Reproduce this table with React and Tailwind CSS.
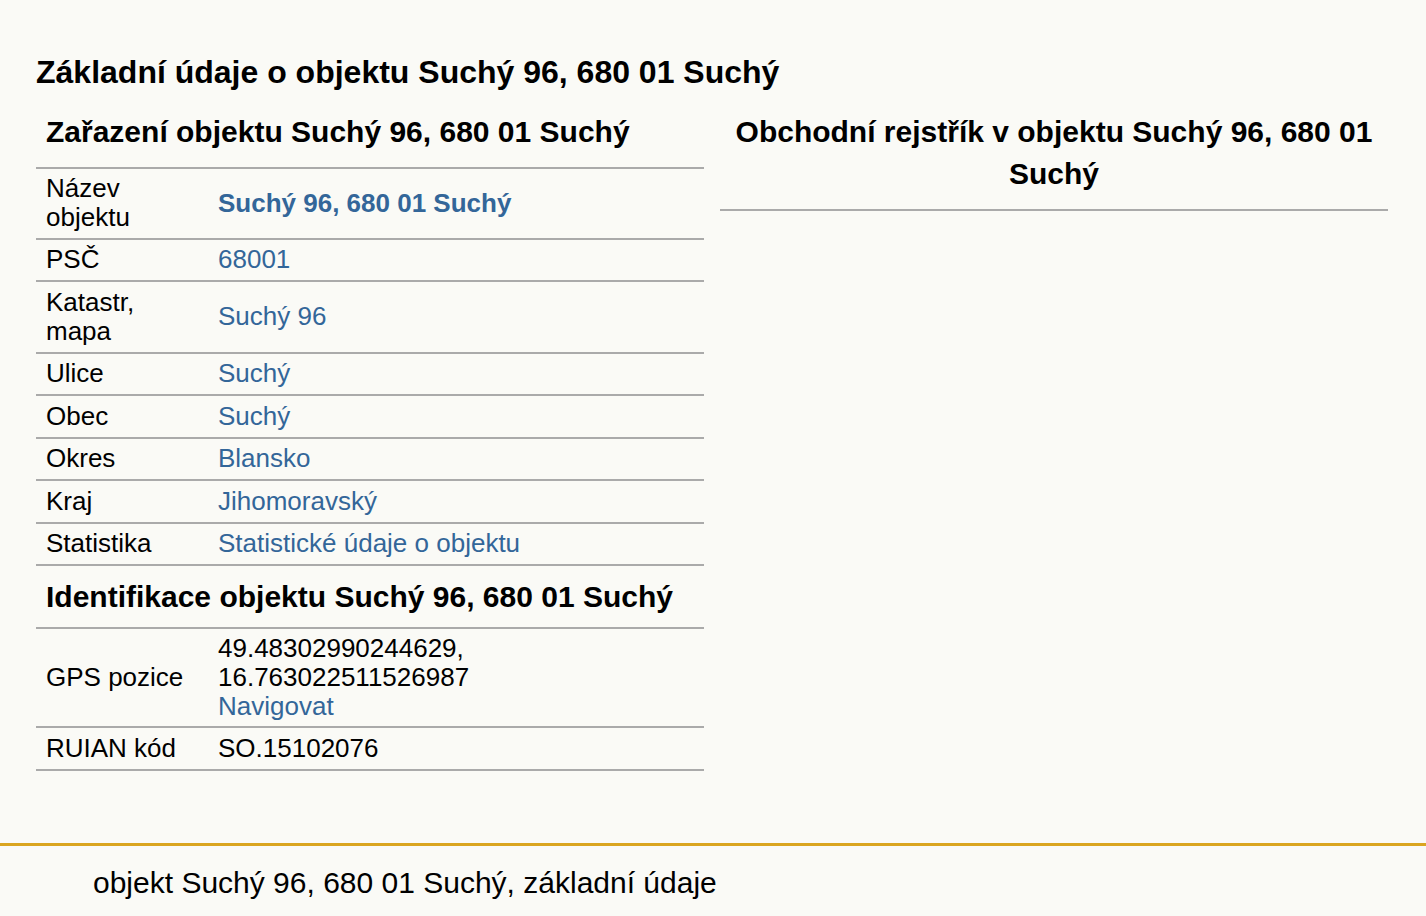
import React from 'react'

const rows = [
  { label: 'Název objektu', value: 'Suchý 96, 680 01 Suchý', bold: true, pad: 'py-[5.25px]' },
  { label: 'PSČ', value: '68001' },
  { label: 'Katastr, mapa', value: 'Suchý 96' },
  { label: 'Ulice', value: 'Suchý' },
  { label: 'Obec', value: 'Suchý' },
  { label: 'Okres', value: 'Blansko' },
  { label: 'Kraj', value: 'Jihomoravský' },
  { label: 'Statistika', value: 'Statistické údaje o objektu' },
]

function Row({ label, children, pad = 'py-[5.75px]' }) {
  return (
    <div className={'grid grid-cols-[172px_1fr] items-center border-b-2 border-[#aaaaaa] text-[26px] leading-[29px] ' + pad}>
      <div className="px-[10px]">{label}</div>
      <div className="px-[10px]">{children}</div>
    </div>
  )
}

function App() {
  return (
    <div className="min-h-screen bg-[#fafaf6] font-['Liberation_Sans',Arial,sans-serif] text-black">
      <main className="pl-[36px] pr-[38px] pt-[54px]">
        <h1 className="text-[32px] font-bold leading-[37px]">Základní údaje o objektu Suchý 96, 680 01 Suchý</h1>

        <div className="mt-[20px] grid grid-cols-2 gap-[16px] items-start">
          {/* left column */}
          <section>
            <h2 className="mb-[14px] px-[10px] text-[30px] font-bold leading-[42px]">Zařazení objektu Suchý 96, 680 01 Suchý</h2>
            <div className="border-t-2 border-[#aaaaaa]">
              {rows.map((r) => (
                <Row key={r.label} label={r.label} pad={r.pad}>
                  <a href="#" className={r.bold ? 'font-bold text-[#336699]' : 'text-[#336699]'}>{r.value}</a>
                </Row>
              ))}
              <h2 className="border-b-2 border-[#aaaaaa] px-[10px] py-[9.5px] text-[30px] font-bold leading-[42px]">Identifikace objektu Suchý 96, 680 01 Suchý</h2>
              <Row label="GPS pozice" pad="py-[5px]">
                49.48302990244629, 16.763022511526987<br />
                <a href="#" className="text-[#336699]">Navigovat</a>
              </Row>
              <Row label="RUIAN kód">SO.15102076</Row>
            </div>
          </section>

          {/* right column */}
          <section>
            <h2 className="mb-[14px] px-[10px] text-center text-[30px] font-bold leading-[42px]">Obchodní rejstřík v objektu Suchý 96, 680 01 Suchý</h2>
            <div className="border-t-2 border-[#aaaaaa]"></div>
          </section>
        </div>
      </main>

      <footer className="mt-[72px] border-t-[3px] border-[#daa520] pl-[93px] pt-[19px] pb-[16px] text-[30px] leading-[35px]">
        objekt Suchý 96, 680 01 Suchý, základní údaje
      </footer>
    </div>
  )
}

export default App
